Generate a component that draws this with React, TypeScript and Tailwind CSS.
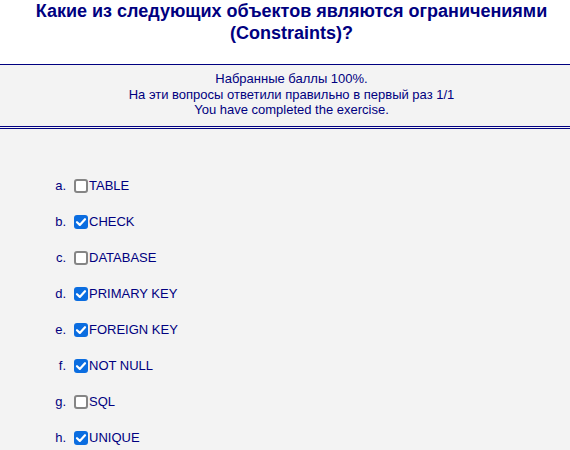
const options = [
  { key: 'a', text: 'TABLE', checked: false },
  { key: 'b', text: 'CHECK', checked: true },
  { key: 'c', text: 'DATABASE', checked: false },
  { key: 'd', text: 'PRIMARY KEY', checked: true },
  { key: 'e', text: 'FOREIGN KEY', checked: true },
  { key: 'f', text: 'NOT NULL', checked: true },
  { key: 'g', text: 'SQL', checked: false },
  { key: 'h', text: 'UNIQUE', checked: true },
];

function Checkbox({ checked }: { checked: boolean }) {
  if (checked) {
    return (
      <span className="ml-[8px] mr-[1px] flex h-[14px] w-[14px] shrink-0 items-center justify-center rounded-[3px] bg-[#0b6de0]">
        <svg width="14" height="14" viewBox="0 0 14 14">
          <polyline
            points="3,7.2 5.8,9.9 11,4.2"
            fill="none"
            stroke="white"
            strokeWidth="2.2"
            strokeLinecap="round"
            strokeLinejoin="round"
          />
        </svg>
      </span>
    );
  }
  return (
    <span className="ml-[8px] mr-[1px] h-[14px] w-[14px] shrink-0 rounded-[3px] border-2 border-[#858585] bg-white" />
  );
}

export default function App() {
  return (
    <div className="min-h-screen bg-[#f3f3f3] font-['Liberation_Sans',Arial,sans-serif] text-[#000080]">
      <div className="h-[64px] bg-white pl-[13px]">
        <h1 className="text-center text-[18px] font-bold leading-[22px]">
          Какие из следующих объектов являются ограничениями
          <br />
          (Constraints)?
        </h1>
      </div>

      <div className="border-y border-t-[#000080] border-b-[3px] border-double border-b-[#000080] pt-[6px] pb-[8.5px] pl-[13px] text-center text-[13px] leading-[15.5px]">
        <div>Набранные баллы 100%.</div>
        <div>На эти вопросы ответили правильно в первый раз 1/1</div>
        <div>You have completed the exercise.</div>
      </div>

      <ol className="pt-[39px] text-[13px]">
        {options.map((o) => (
          <li key={o.key} className="flex h-[36px] items-center">
            <span className="w-[66px] text-right">{o.key}.</span>
            <Checkbox checked={o.checked} />
            <span>{o.text}</span>
          </li>
        ))}
      </ol>
    </div>
  );
}
